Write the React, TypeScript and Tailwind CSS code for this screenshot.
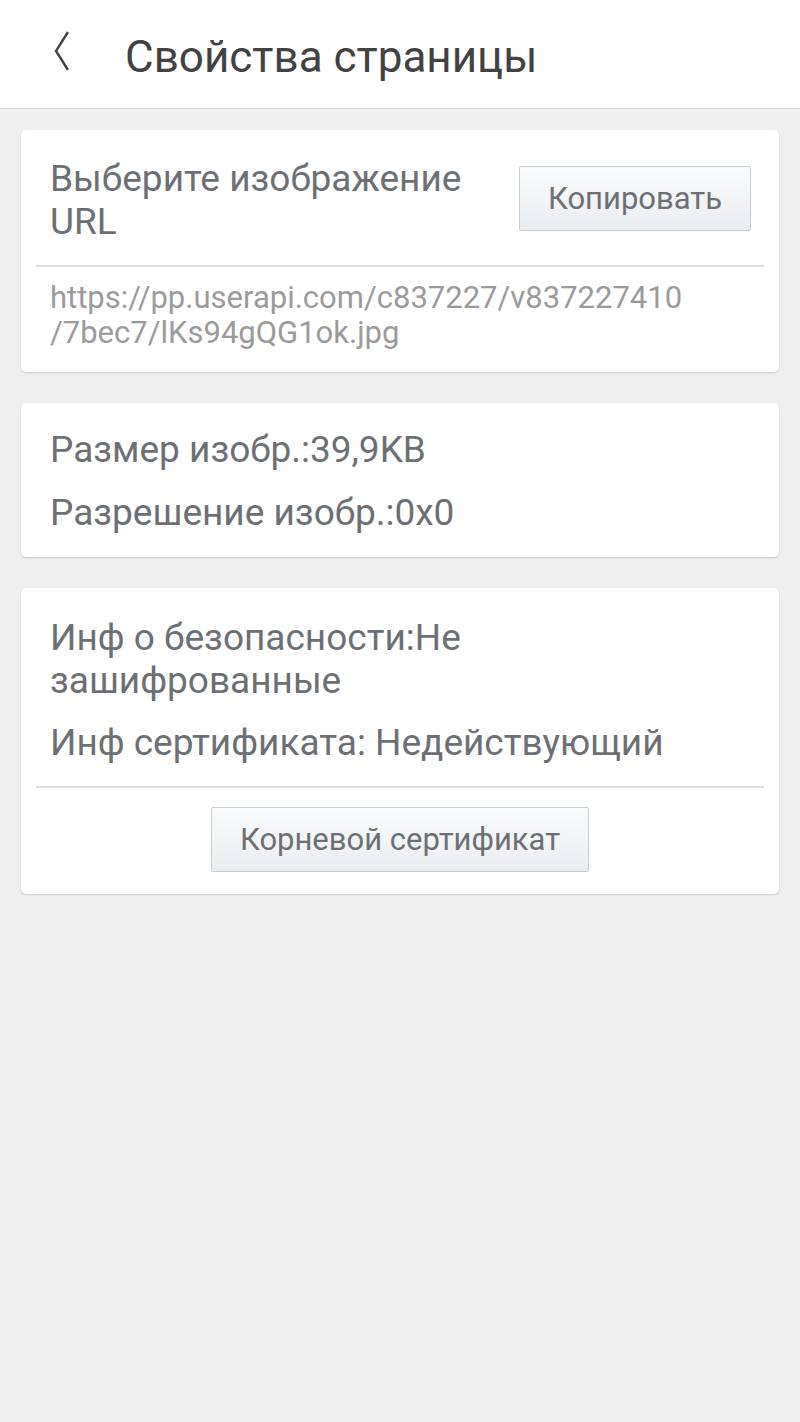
import { ReactNode } from "react";

function Card({ children }: { children: ReactNode }) {
  return (
    <div className="mx-[21px] rounded-[5px] bg-white shadow-[0_1px_2px_rgba(0,0,0,0.16)]">
      {children}
    </div>
  );
}

function Divider() {
  return <div className="mx-[15px] h-[2px] bg-[#dedede]" />;
}

function GrayButton({ label, className = "" }: { label: string; className?: string }) {
  return (
    <button
      className={`h-[65px] rounded-[2px] border border-[#c9ced3] bg-gradient-to-b from-[#fafbfc] to-[#eaedf0] text-[31px] leading-none text-[#6c7075] ${className}`}
    >
      {label}
    </button>
  );
}

export default function App() {
  return (
    <div className="min-h-[1422px] bg-[#efefef] font-['Roboto',sans-serif]">
      {/* Header */}
      <header className="flex h-[109px] items-center border-b border-[#d6d6d6] bg-white pt-[6px]">
        <svg
          className="ml-[54px] mb-[12px]"
          width="16"
          height="40"
          viewBox="0 0 16 40"
          fill="none"
        >
          <polyline
            points="14,1 2,20 14,39"
            stroke="#444444"
            strokeWidth="2.4"
            strokeLinejoin="miter"
          />
        </svg>
        <h1 className="ml-[55px] text-[44px] leading-none text-[#424242]">
          Свойства страницы
        </h1>
      </header>

      <div className="flex flex-col gap-[31px] pt-[21px]">
        {/* URL card */}
        <Card>
          <div className="flex items-start justify-between pl-[29px] pr-[28px] pt-[27px]">
            <p className="text-[37px] leading-[43px] text-[#6c7075]">
              Выберите изображение
              <br />
              URL
            </p>
            <GrayButton label="Копировать" className="mt-[9px] w-[232px]" />
          </div>
          <div className="mt-[22px]">
            <Divider />
          </div>
          <p className="px-[29px] pb-[22px] pt-[13px] text-[31px] leading-[35px] text-[#9b9b9b]">
            https://pp.userapi.com/c837227/v837227410
            <br />
            /7bec7/lKs94gQG1ok.jpg
          </p>
        </Card>

        {/* Size card */}
        <Card>
          <div className="flex flex-col gap-[20px] px-[29px] pb-[23px] pt-[25px] text-[37px] leading-[43px] text-[#6c7075]">
            <p>Размер изобр.:39,9KB</p>
            <p>Разрешение изобр.:0x0</p>
          </div>
        </Card>

        {/* Security card */}
        <Card>
          <div className="flex flex-col gap-[19px] px-[29px] pt-[28px] text-[37px] leading-[43px] text-[#6c7075]">
            <p>
              Инф о безопасности:Не
              <br />
              зашифрованные
            </p>
            <p>Инф сертификата: Недействующий</p>
          </div>
          <div className="mt-[22px]">
            <Divider />
          </div>
          <div className="flex justify-center pb-[22px] pt-[19px]">
            <GrayButton label="Корневой сертификат" className="w-[378px]" />
          </div>
        </Card>
      </div>
    </div>
  );
}
